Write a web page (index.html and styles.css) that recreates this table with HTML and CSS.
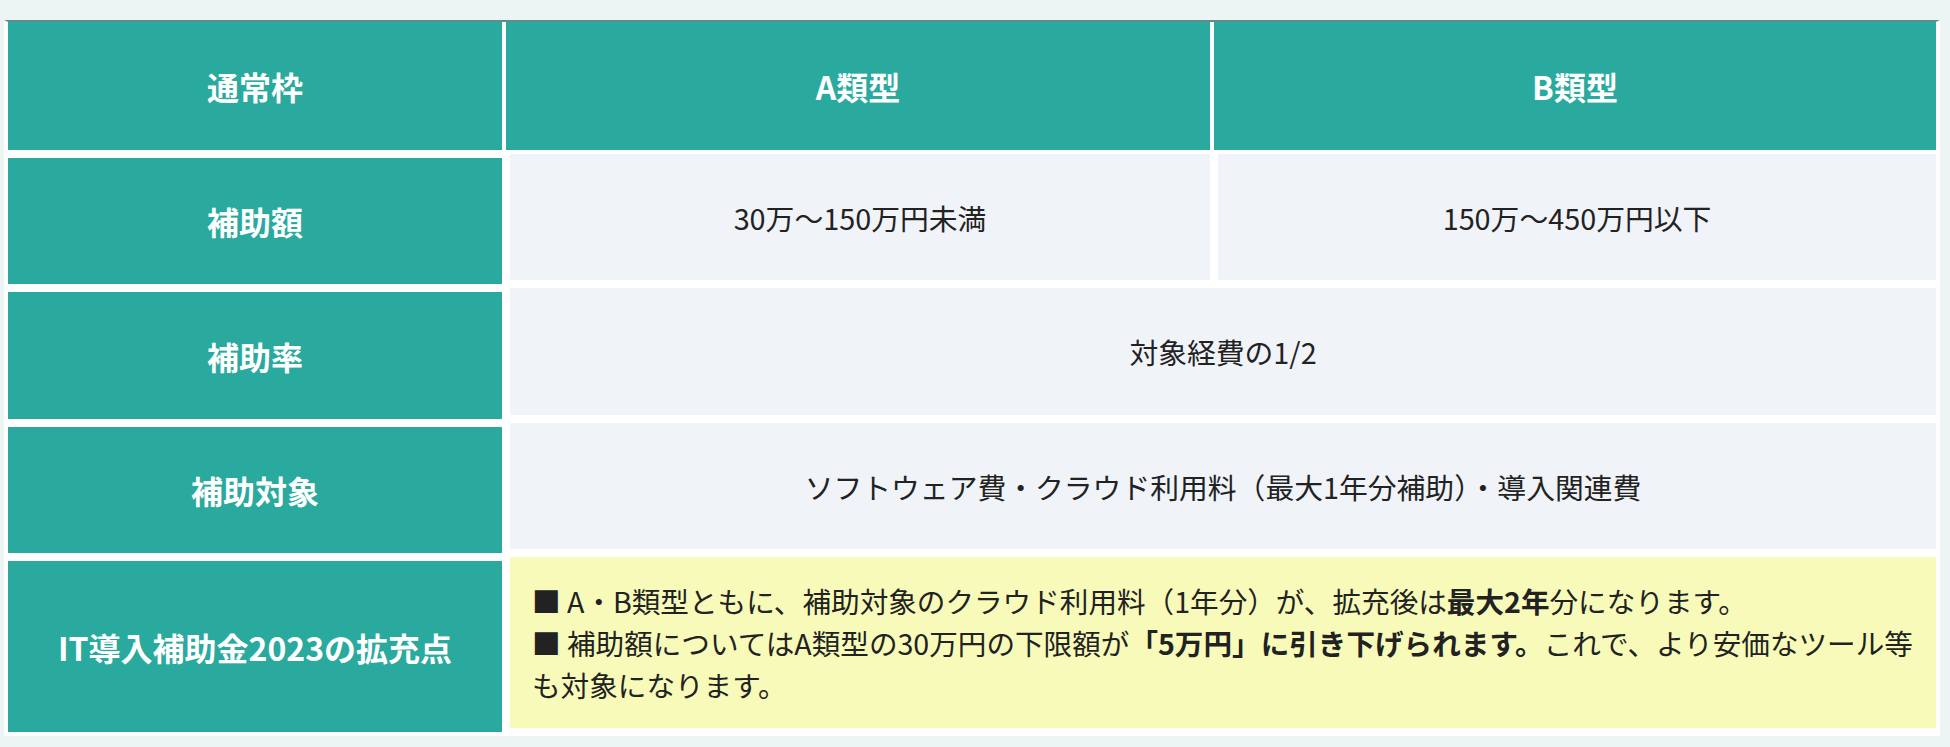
FILE: index.html
```html
<!DOCTYPE html>
<html lang="ja">
<head>
<meta charset="utf-8">
<title>IT導入補助金 通常枠</title>
<link rel="stylesheet" href="styles.css">
</head>
<body>
<div class="compare">
  <div class="head">通常枠</div>
  <div class="head">A類型</div>
  <div class="head">B類型</div>

  <div class="label">補助額</div>
  <div class="cell">30万〜150万円未満</div>
  <div class="cell">150万〜450万円以下</div>

  <div class="label">補助率</div>
  <div class="cell span">対象経費の1/2</div>

  <div class="label">補助対象</div>
  <div class="cell span">ソフトウェア費・クラウド利用料（最大1年分補助）・導入関連費</div>

  <div class="label">IT導入補助金2023の拡充点</div>
  <div class="cell span note">
    <p>■ A・B類型ともに、補助対象のクラウド利用料（1年分）が、拡充後は<strong>最大2年</strong>分になります。<br>■ 補助額についてはA類型の30万円の下限額が<strong>「5万円」に引き下げられます。</strong>これで、より安価なツール等も対象になります。</p>
  </div>
</div>
</body>
</html>
```

FILE: styles.css
```css
html, body {
  margin: 0;
  padding: 0;
}

body {
  background: #edf5f4;
  font-family: "Noto Sans CJK JP", "Noto Sans", sans-serif;
  color: #222;
}

.compare {
  display: grid;
  grid-template-columns: 494px 704px 722px;
  grid-template-rows: 128px 130px 131px 130px 175px;
  gap: 4px;
  width: 1928px;
  margin: 20px 0 0 4px;
  background: #fff;
  border: 4px solid #fff;
  border-top: 2px solid #5d8f8a;
}

.head,
.label {
  display: flex;
  align-items: center;
  justify-content: center;
  background: #2aaa9e;
  color: #fff;
  font-size: 32px;
  font-weight: 700;
  text-align: center;
}

.label {
  margin-top: 4px;
}

.cell {
  display: flex;
  align-items: center;
  justify-content: center;
  margin: 0 0 4px 4px;
  background: #f0f3f8;
  font-size: 28.8px;
  text-align: center;
}

.span {
  grid-column: 2 / 4;
}

.note {
  justify-content: flex-start;
  background: #f7fab9;
  padding: 0 14px 0 22px;
  font-size: 28.6px;
  text-align: left;
}

.note p {
  margin: 0;
  line-height: 42px;
}

.note strong {
  font-weight: 700;
}
```
